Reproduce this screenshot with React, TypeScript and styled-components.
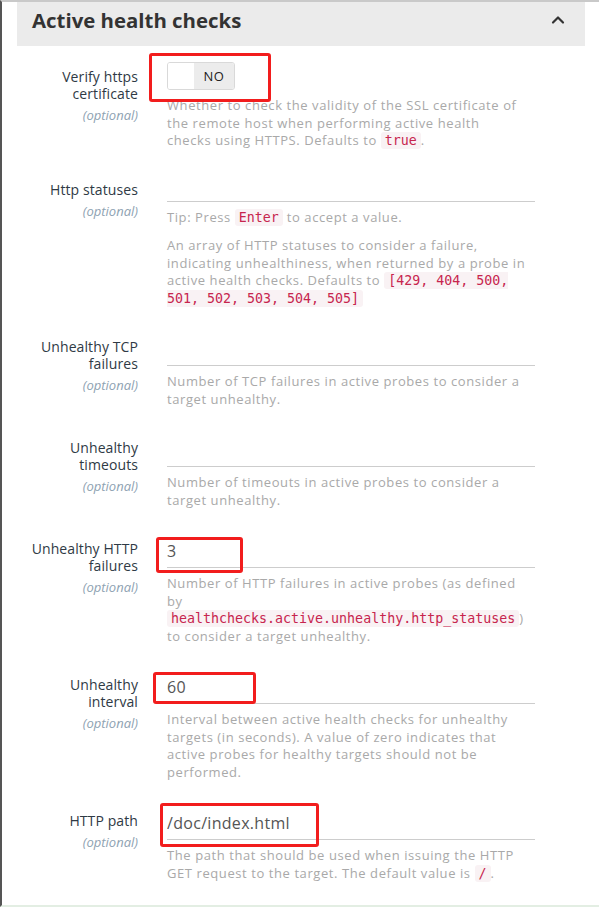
import React from "react";
import styled, { createGlobalStyle } from "styled-components";
import { ChevronUp } from "lucide-react";

const GlobalStyle = createGlobalStyle`
  html, body { margin: 0; padding: 0; background: #fff; }
  body { font-family: "Open Sans", "Liberation Sans", sans-serif; }
  *, *::before, *::after { box-sizing: border-box; }
`;

const Frame = styled.div`
  height: 907px;
  overflow: hidden;
  border-left: 2px solid #555;
  border-top: 2px solid #c9c9c9;
  border-bottom: 2px solid #e3eee3;
  padding: 0 14px 0 15px;
`;

const Header = styled.div`
  height: 44px;
  background: #ebebeb;
  display: flex;
  align-items: center;
  justify-content: space-between;
  padding: 0 17px 8px 15px;
  color: #333;
`;

const Title = styled.h2`
  margin: 0;
  font-size: 20.4px;
  font-weight: 700;
  line-height: 24px;
  color: #333;
`;

const Rows = styled.div`
  padding: 16px 0 0 5px;
`;

const Row = styled.div`
  display: grid;
  grid-template-columns: 116px 368px;
  column-gap: 29px;
  align-items: start;
  margin-bottom: 25px;
`;

const LabelCol = styled.div`
  padding-top: 6px;
  display: flex;
  flex-direction: column;
  align-items: flex-end;
  text-align: right;
`;

const LabelText = styled.label`
  font-size: 14px;
  font-weight: 500;
  line-height: 17px;
  letter-spacing: 0.1px;
  color: #2f3a45;
`;

const Optional = styled.span`
  margin-top: 5px;
  font-size: 13px;
  font-style: italic;
  line-height: 17px;
  color: #8ea2b2;
`;

const Field = styled.div`
  position: relative;
  display: flex;
  flex-direction: column;
`;

const Toggle = styled.div`
  display: flex;
  width: 68px;
  height: 28px;
  border: 1px solid #d9d9d9;
  border-radius: 3px;
  overflow: hidden;
`;

const Knob = styled.span`
  width: 26px;
  background: #fff;
`;

const ToggleText = styled.span`
  flex: 1;
  display: flex;
  align-items: center;
  justify-content: center;
  background: #ececec;
  font-size: 13px;
  letter-spacing: 0.5px;
  color: #222;
`;

const TextInput = styled.input<{ $compact?: boolean }>`
  display: block;
  width: 100%;
  height: ${(p) => (p.$compact ? 27 : 34)}px;
  padding: 0;
  border: 0;
  border-bottom: 1px solid #cdcdcd;
  outline: none;
  background: transparent;
  font-family: "Open Sans", "Liberation Sans", sans-serif;
  font-size: 16px;
  letter-spacing: 0.3px;
  color: #555;
`;

const Help = styled.div`
  margin-top: 7px;
  font-size: 13px;
  line-height: 17.5px;
  letter-spacing: 0.58px;
  color: #a9a9a9;
`;

const HelpPara = styled.p`
  margin: 0;
  & + & {
    margin-top: 11px;
  }
`;

const Code = styled.code`
  font-family: "DejaVu Sans Mono", "Liberation Mono", monospace;
  font-size: 13.3px;
  letter-spacing: 0;
  color: #c7254e;
  background: #f9f2f4;
  padding: 1px 4px;
  border-radius: 3px;
`;

const Annotation = styled.span<{ $top: number; $left: number; $w: number; $h: number }>`
  position: absolute;
  top: ${(p) => p.$top}px;
  left: ${(p) => p.$left}px;
  width: ${(p) => p.$w}px;
  height: ${(p) => p.$h}px;
  border: 3px solid #f21d1d;
  border-radius: 3px;
  pointer-events: none;
`;

type Box = { top: number; left: number; w: number; h: number };

type FieldDef = {
  label: string;
  control: React.ReactNode;
  help: React.ReactNode;
  box?: Box;
};

const fields: FieldDef[] = [
  {
    label: "Verify https certificate",
    control: (
      <Toggle>
        <Knob />
        <ToggleText>NO</ToggleText>
      </Toggle>
    ),
    help: (
      <HelpPara>
        Whether to check the validity of the SSL certificate of the remote host when performing
        active health
        <br />
        checks using HTTPS. Defaults to <Code>true</Code>.
      </HelpPara>
    ),
    box: { top: -9, left: -18, w: 122, h: 49 },
  },
  {
    label: "Http statuses",
    control: <TextInput $compact readOnly defaultValue="" />,
    help: (
      <>
        <HelpPara>
          Tip: Press <Code>Enter</Code> to accept a value.
        </HelpPara>
        <HelpPara>
          An array of HTTP statuses to consider a failure, indicating unhealthiness, when returned
          by a probe in active health checks. Defaults to{" "}
          <Code>[429, 404, 500, 501, 502, 503, 504, 505]</Code>
        </HelpPara>
      </>
    ),
  },
  {
    label: "Unhealthy TCP failures",
    control: <TextInput readOnly defaultValue="" />,
    help: <HelpPara>Number of TCP failures in active probes to consider a target unhealthy.</HelpPara>,
  },
  {
    label: "Unhealthy timeouts",
    control: <TextInput readOnly defaultValue="" />,
    help: <HelpPara>Number of timeouts in active probes to consider a target unhealthy.</HelpPara>,
  },
  {
    label: "Unhealthy HTTP failures",
    control: <TextInput readOnly defaultValue="3" />,
    help: (
      <HelpPara>
        Number of HTTP failures in active probes (as defined
        <br />
        by <Code>healthchecks.active.unhealthy.http_statuses</Code>) to consider a target
        unhealthy.
      </HelpPara>
    ),
    box: { top: 3, left: -11, w: 87, h: 36 },
  },
  {
    label: "Unhealthy interval",
    control: <TextInput readOnly defaultValue="60" />,
    help: (
      <HelpPara>
        Interval between active health checks for unhealthy targets (in seconds). A value of zero
        indicates that active probes for healthy targets should not be performed.
      </HelpPara>
    ),
    box: { top: 2, left: -14, w: 103, h: 32 },
  },
  {
    label: "HTTP path",
    control: <TextInput readOnly defaultValue="/doc/index.html" />,
    help: (
      <HelpPara>
        The path that should be used when issuing the HTTP GET request to the target. The default
        value is <Code>/</Code>.
      </HelpPara>
    ),
    box: { top: -3, left: -7, w: 159, h: 44 },
  },
];

export default function App() {
  return (
    <>
      <GlobalStyle />
      <Frame>
        <Header>
          <Title>Active health checks</Title>
          <ChevronUp size={20} strokeWidth={2.6} />
        </Header>
        <Rows>
          {fields.map((f) => (
            <Row key={f.label}>
              <LabelCol>
                <LabelText>{f.label}</LabelText>
                <Optional>(optional)</Optional>
              </LabelCol>
              <Field>
                {f.control}
                <Help>{f.help}</Help>
                {f.box && (
                  <Annotation $top={f.box.top} $left={f.box.left} $w={f.box.w} $h={f.box.h} />
                )}
              </Field>
            </Row>
          ))}
        </Rows>
      </Frame>
    </>
  );
}
